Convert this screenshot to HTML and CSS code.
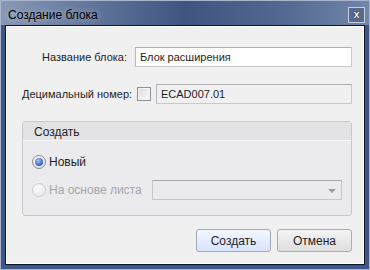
FILE: index.html
```html
<!DOCTYPE html>
<html lang="ru">
<head>
    <meta charset="UTF-8">
    <title>Создание блока</title>
    <link rel="stylesheet" href="styles.css">
</head>
<body>
    <div class="window">
        <div class="title-bar">
            <span class="title-text">Создание блока</span>
            <span class="close-btn">x</span>
        </div>
        <div class="content">
            <div class="form-row">
                <label class="field-label" for="blockName">Название блока:</label>
                <input type="text" id="blockName" class="text-input" value="Блок расширения">
            </div>
            <div class="form-row">
                <label class="field-label" for="decNumber">Децимальный номер:</label>
                <span class="checkbox"></span>
                <input type="text" id="decNumber" class="text-input readonly" value="ECAD007.01" readonly>
            </div>

            <div class="group-box">
                <div class="group-header">Создать</div>
                <div class="group-body">
                    <div class="radio-row">
                        <span class="radio checked"><span class="radio-dot"></span></span>
                        <span class="radio-label">Новый</span>
                    </div>
                    <div class="radio-row disabled">
                        <span class="radio"></span>
                        <span class="radio-label">На основе листа</span>
                        <div class="combo">
                            <span class="combo-arrow"></span>
                        </div>
                    </div>
                </div>
            </div>

            <div class="button-row">
                <button type="button" class="btn default">Создать</button>
                <button type="button" class="btn">Отмена</button>
            </div>
        </div>
    </div>
</body>
</html>
```

FILE: styles.css
```css
* {
    box-sizing: border-box;
}
body {
    margin: 0;
    font-family: "Liberation Sans", Arial, sans-serif;
    font-size: 11px;
    color: #1e1e1e;
    background-color: #3f5787;
}
.window {
    width: 370px;
    height: 270px;
    display: flex;
    flex-direction: column;
    border: 1px solid #a9b5cc;
    background-color: #3f5787;
}
.title-bar {
    height: 24px;
    display: flex;
    align-items: center;
    justify-content: space-between;
    padding: 3px 4px 0 7px;
    background: linear-gradient(90deg, #8898b6 0%, #61759b 25%, #3f5580 50%, #51678f 75%, #7286aa 100%);
}
.title-text {
    font-size: 12px;
    color: #000;
    text-shadow: 0 0 6px rgba(255, 255, 255, 0.55);
}
.close-btn {
    width: 17px;
    height: 16px;
    display: flex;
    align-items: center;
    justify-content: center;
    border: 1px solid #c6cfe0;
    background-color: #566a92;
    color: #fff;
    font-weight: bold;
    font-size: 11px;
    line-height: 1;
    text-shadow: 0 0 1px #000, 0 0 1px #000;
}
.content {
    flex: 1;
    margin: 0 4px 4px 4px;
    border: 1px solid #0e1528;
    box-shadow: inset 0 0 0 1px #fdfdfd;
    background-color: #f0f0f0;
    padding: 21px 12px 0 16px;
}
.form-row {
    display: flex;
    align-items: center;
    margin-bottom: 17px;
}
.field-label {
    flex: none;
    width: 105px;
    text-align: right;
    white-space: nowrap;
    margin-right: 8px;
}
.text-input {
    flex: 1;
    min-width: 0;
    height: 20px;
    padding: 0 4px;
    font-family: inherit;
    font-size: 11px;
    color: #1e1e1e;
    background-color: #fff;
    border: 1px solid #c9c9c9;
    border-top-color: #b0b0b0;
    border-left-color: #b8b8b8;
    outline: none;
}
.text-input.readonly {
    background-color: #f0f0f0;
}
.checkbox {
    flex: none;
    width: 14px;
    height: 14px;
    margin: 0 5px 0 2px;
    border: 1px solid #8e8f99;
    background: linear-gradient(135deg, #dcdde2, #fafafa);
    box-shadow: inset 0 0 0 1px #f4f4f4;
}
.group-box {
    margin: 0 0 13px 0;
    border: 1px solid #c8c8cc;
    border-radius: 3px;
    background-color: #ebebee;
}
.group-header {
    height: 19px;
    padding: 3px 0 0 11px;
    background-color: #e3e3e6;
    border-bottom: 1px solid #f8f8fa;
    color: #1e1e1e;
    font-size: 12px;
}
.group-body {
    padding: 11px 9px 15px 9px;
    display: flex;
    flex-direction: column;
    gap: 8px;
}
.radio-row {
    height: 20px;
    display: flex;
    align-items: center;
    font-size: 12px;
}
.radio {
    width: 14px;
    height: 14px;
    margin-right: 3px;
    border-radius: 50%;
    border: 1px solid #8a8d96;
    background: radial-gradient(circle at 40% 35%, #ffffff, #d6d8de);
    display: flex;
    align-items: center;
    justify-content: center;
}
.radio-dot {
    width: 8px;
    height: 8px;
    border-radius: 50%;
    background: radial-gradient(circle at 40% 35%, #a9c4f5, #2d5fc4 70%, #1c3f8c);
}
.radio-row.disabled .radio {
    border-color: #cfd0d4;
    background: radial-gradient(circle at 40% 35%, #fafafa, #e4e4e8);
}
.radio-row.disabled .radio-label {
    color: #a6a6a6;
}
.combo {
    margin-left: auto;
    width: 190px;
    height: 20px;
    border: 1px solid #c6c6ca;
    border-top-color: #a8a8ac;
    background-color: #ebebee;
    position: relative;
}
.combo-arrow {
    position: absolute;
    right: 5px;
    top: 8px;
    border-left: 4px solid transparent;
    border-right: 4px solid transparent;
    border-top: 4px solid #9a9a9e;
}
.button-row {
    display: flex;
    justify-content: flex-end;
    gap: 6px;
}
.btn {
    width: 75px;
    height: 23px;
    font-family: inherit;
    font-size: 12px;
    color: #1e1e1e;
    border: 1px solid #acacac;
    border-radius: 3px;
    background: linear-gradient(#f4f4f4, #dedede);
}
.btn.default {
    border-color: #a3a8b4;
    background: linear-gradient(#f4f7fe, #d8e3fb);
}
```
